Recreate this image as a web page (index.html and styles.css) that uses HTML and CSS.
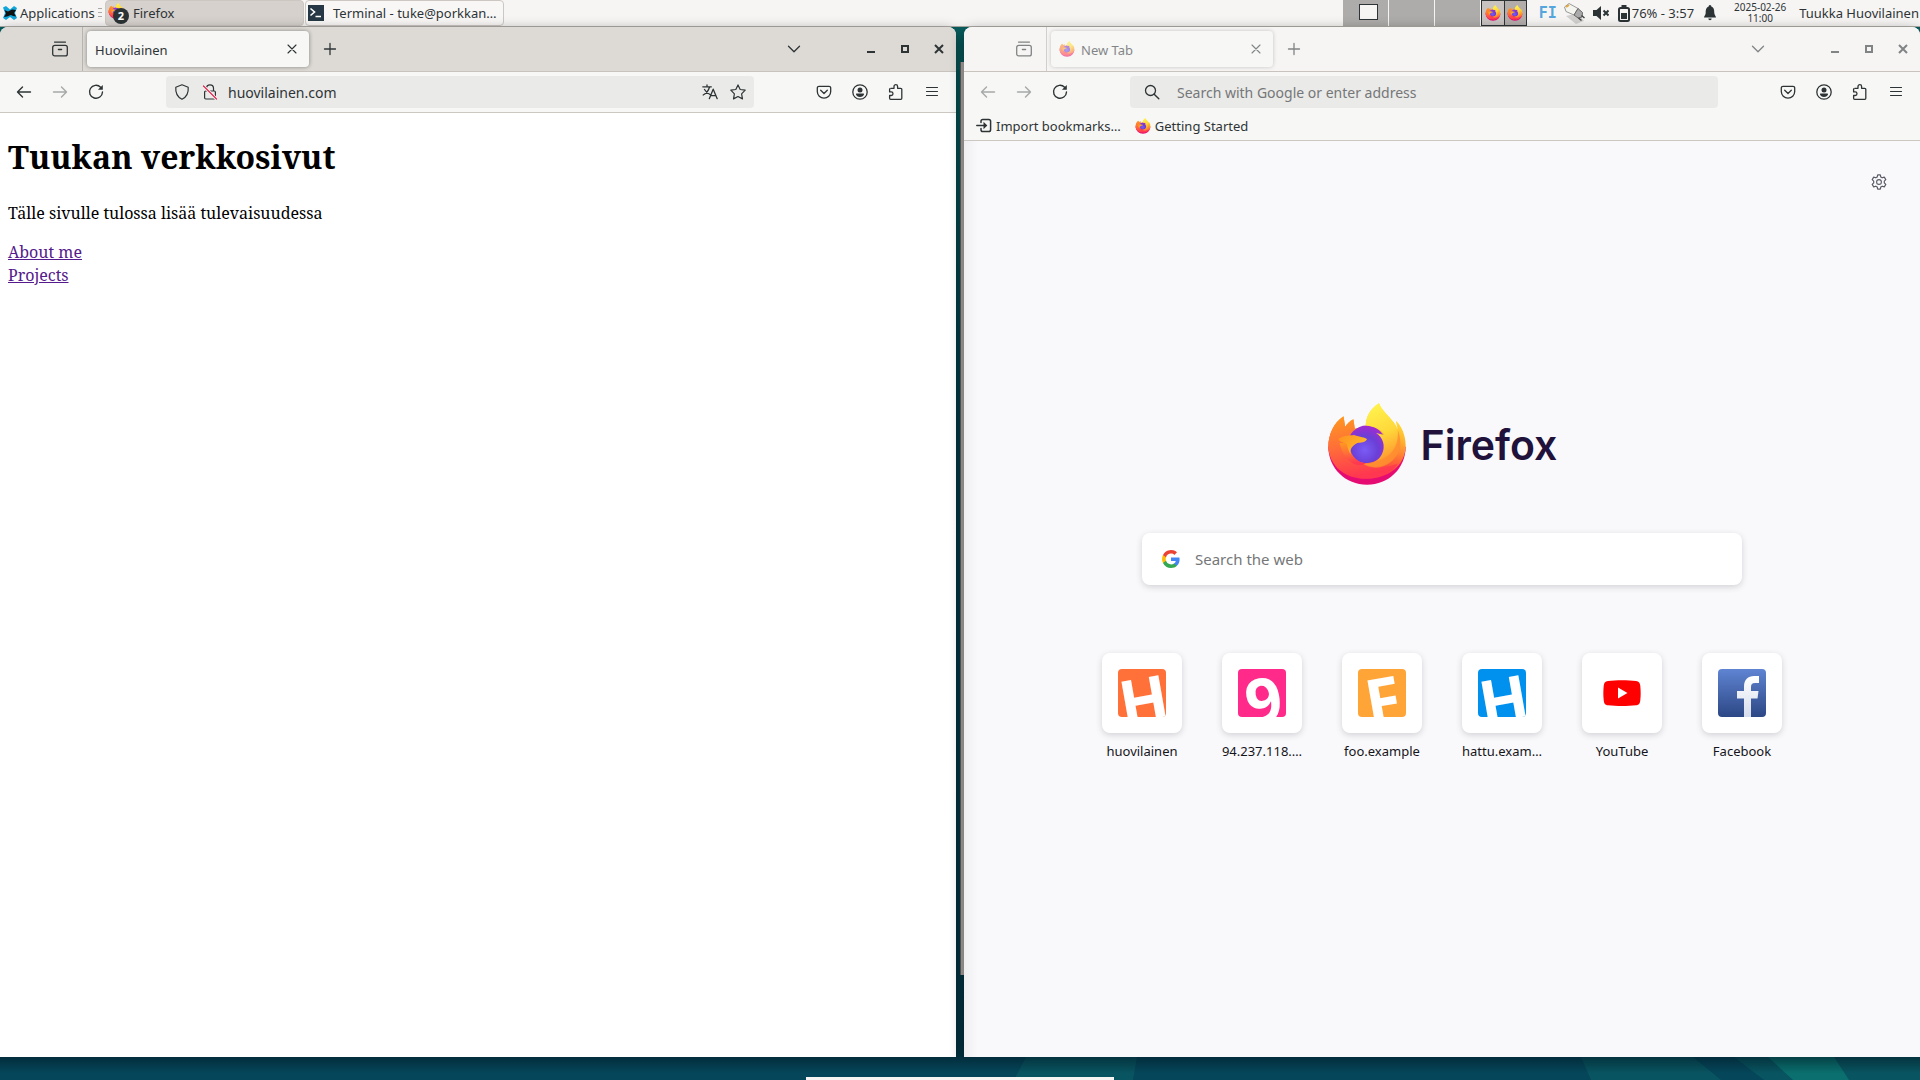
FILE: index.html
```html
<!DOCTYPE html>
<html lang="en">
<head>
<meta charset="utf-8">
<title>Desktop</title>
<link rel="stylesheet" href="styles.css">
</head>
<body>
<svg class="defs" aria-hidden="true">
  <defs>
    <linearGradient id="fx-body" x1="0.75" y1="0.1" x2="0.35" y2="1">
      <stop offset="0" stop-color="#ffe83a"/><stop offset="0.3" stop-color="#ffb02e"/>
      <stop offset="0.55" stop-color="#ff6a36"/><stop offset="0.8" stop-color="#ff3647"/><stop offset="1" stop-color="#e8106e"/>
    </linearGradient>
    <linearGradient id="fx-side" x1="0" y1="0" x2="0.2" y2="1">
      <stop offset="0" stop-color="#ff9a1f"/><stop offset="0.5" stop-color="#ff6f38"/><stop offset="1" stop-color="#ff3750"/>
    </linearGradient>
    <linearGradient id="fx-flame" x1="0.3" y1="0" x2="0.6" y2="1">
      <stop offset="0" stop-color="#fff44f"/><stop offset="0.5" stop-color="#ffd83a"/><stop offset="1" stop-color="#ff8a2e"/>
    </linearGradient>
    <linearGradient id="fx-head" x1="0" y1="0" x2="1" y2="0.6">
      <stop offset="0" stop-color="#ff9020"/><stop offset="1" stop-color="#ffbb2c"/>
    </linearGradient>
    <radialGradient id="fx-globe" cx="0.45" cy="0.65" r="0.65">
      <stop offset="0" stop-color="#7a5cf5"/><stop offset="0.55" stop-color="#6a3fd6"/><stop offset="1" stop-color="#a32bd0"/>
    </radialGradient>
    <linearGradient id="fb" x1="0" y1="0" x2="0" y2="1"><stop offset="0" stop-color="#5f84d2"/><stop offset="1" stop-color="#2c4785"/></linearGradient>
    <linearGradient id="fbf" x1="0" y1="0" x2="0" y2="1"><stop offset="0" stop-color="#fff"/><stop offset="1" stop-color="#d5dcec"/></linearGradient>
  </defs>
  <symbol id="firefox" viewBox="0 0 242 254">
    <path fill="#e60b72" d="M4 135C4 200 56 250 121 250S238 200 238 135Z"/>
    <path fill="url(#fx-body)" d="M50 43C20 62 4 100 4 135C8 196 56 232 118 232C186 232 238 190 238 132C238 102 226 72 208 57L214 84C204 54 170 35 157 4C130 22 118 44 117 74L84 80L80 52C68 58 60 66 55 75Z"/>
    <path fill="url(#fx-side)" d="M50 43C20 62 4 100 4 135C8 196 56 232 118 232C160 232 195 215 215 186C180 200 120 205 85 165L72 130L84 80L80 52C68 58 60 66 55 75Z"/>
    <circle cx="120" cy="128" r="57" fill="url(#fx-globe)"/>
    <path fill="url(#fx-flame)" d="M157 4C130 22 118 44 117 71C145 74 165 84 174 100L148 94C170 106 178 135 166 158C155 180 130 192 105 184C150 212 205 190 220 140C226 115 218 90 214 84C204 54 170 35 157 4Z"/>
    <path fill="#ff8a30" opacity=".75" d="M214 84C218 128 200 164 152 178C128 188 104 184 104 184C144 214 200 196 220 145C226 120 218 95 214 84Z"/>
    <path fill="url(#fx-side)" d="M38 124L68 124C66 154 88 184 118 185C90 202 50 180 38 124Z"/>
    <path fill="url(#fx-head)" d="M34 112C50 100 68 102 82 100C100 106 115 107 121 113C116 123 102 123 92 124C76 132 68 143 72 158C62 145 64 136 58 124C48 124 38 120 34 112Z"/>
  </symbol>
  <symbol id="i-view" viewBox="0 0 16 16"><path fill="none" stroke="currentColor" stroke-width="1.3" stroke-linecap="round" d="M2.5 1.1h11M2.7 4.4h10.6a2 2 0 0 1 2 2v6.500a2 2 0 0 1-2 2H2.700a2 2 0 0 1-2-2v-6.500a2 2 0 0 1 2-2ZM6.400 8.500h3.200"/></symbol>
  <symbol id="i-close" viewBox="0 0 10 10"><path fill="none" stroke="currentColor" stroke-width="1.1" stroke-linecap="round" d="M1 1l8 8M9 1L1 9"/></symbol>
  <symbol id="i-plus" viewBox="0 0 16 16"><path fill="none" stroke="currentColor" stroke-width="1.3" stroke-linecap="round" d="M8 2.500v11M2.500 8h11"/></symbol>
  <symbol id="i-down" viewBox="0 0 16 16"><path fill="none" stroke="currentColor" stroke-width="1.3" stroke-linecap="round" stroke-linejoin="round" d="M2.500 5.200L8 10.700l5.500-5.500"/></symbol>
  <symbol id="i-min" viewBox="0 0 10 10"><path fill="currentColor" d="M1 7h8v2H1z"/></symbol>
  <symbol id="i-max" viewBox="0 0 10 10"><path fill="none" stroke="currentColor" stroke-width="2" d="M2 2h6v6H2z"/></symbol>
  <symbol id="i-x" viewBox="0 0 10 10"><path fill="none" stroke="currentColor" stroke-width="2" d="M1 1l8 8M9 1L1 9"/></symbol>
  <symbol id="i-back" viewBox="0 0 16 16"><path fill="none" stroke="currentColor" stroke-width="1.400" stroke-linecap="round" stroke-linejoin="round" d="M14.500 8H1.800M6.500 3L1.500 8l5 5"/></symbol>
  <symbol id="i-fwd" viewBox="0 0 16 16"><path fill="none" stroke="currentColor" stroke-width="1.400" stroke-linecap="round" stroke-linejoin="round" d="M1.500 8h12.700M9.500 3l5 5-5 5"/></symbol>
  <symbol id="i-reload" viewBox="0 0 16 16"><path fill="none" stroke="currentColor" stroke-width="1.400" stroke-linecap="round" d="M12.600 3.200A6.500 6.500 0 1 0 14.500 8"/><path fill="currentColor" d="M14.800 1.100v4.600h-4.900z"/></symbol>
  <symbol id="i-shield" viewBox="0 0 16 16"><path fill="none" stroke="currentColor" stroke-width="1.200" stroke-linejoin="round" d="M8 .8L14.200 3.200C14.700 9 12.500 13 8 15.300C3.500 13 1.300 9 1.800 3.200Z"/></symbol>
  <symbol id="i-lock" viewBox="0 0 16 16"><path fill="none" stroke="currentColor" stroke-width="1.200" d="M4.500 7V4.300a3.500 3.500 0 0 1 7 0V7M3.800 7h8.400a1.200 1.200 0 0 1 1.200 1.200v5.600a1.200 1.200 0 0 1-1.200 1.200H3.800a1.200 1.200 0 0 1-1.200-1.200V8.200A1.200 1.200 0 0 1 3.800 7Z"/><path stroke="#f8f8f8" stroke-width="3" d="M1.500 2l13 13"/><path stroke="#e22850" stroke-width="1.200" stroke-linecap="round" d="M1.500 2l13 13"/></symbol>
  <symbol id="i-translate" viewBox="0 0 16 16"><path fill="none" stroke="currentColor" stroke-width="1.300" stroke-linecap="round" stroke-linejoin="round" d="M.8 2.800h8.500M5 1v1.600M7.500 3C6.500 7 4 9.500 1.200 11M2.500 5.500C4 8 6 9.500 8 10.500M7.300 14.700L11.200 5.200l4 9.500M8.700 11.700h5"/></symbol>
  <symbol id="i-star" viewBox="0 0 16 16"><path fill="none" stroke="currentColor" stroke-width="1.200" stroke-linejoin="round" d="M8 .9L10.200 5.500l5 .7-3.600 3.600.9 5.100L8 12.500l-4.500 2.400.9-5.100L.8 6.200l5-.7Z"/></symbol>
  <symbol id="i-pocket" viewBox="0 0 16 16"><path fill="none" stroke="currentColor" stroke-width="1.300" stroke-linecap="round" stroke-linejoin="round" d="M3 2.300h10a1.700 1.700 0 0 1 1.700 1.700v3.500a6.700 6.700 0 0 1-13.400 0V4A1.700 1.700 0 0 1 3 2.300ZM4.700 6.300L8 9.500l3.300-3.200"/></symbol>
  <symbol id="i-account" viewBox="0 0 16 16"><circle cx="8" cy="8" r="7.200" fill="none" stroke="currentColor" stroke-width="1.300"/><circle cx="8" cy="5.900" r="2.500" fill="currentColor"/><path fill="currentColor" d="M4.700 9.400h6.600a.8.8 0 0 1 .8.900c-.4 1.600-2 2.600-4.100 2.600s-3.700-1-4.100-2.600a.8.8 0 0 1 .8-.9Z"/></symbol>
  <symbol id="i-ext" viewBox="0 0 16 16"><path fill="none" stroke="currentColor" stroke-width="1.300" stroke-linejoin="round" d="M2.800 4.300H6V2.500a1.800 1.800 0 0 1 3.600 0v1.800h3.200a1 1 0 0 1 1 1v9a1 1 0 0 1-1 1H2.600a1 1 0 0 1-1-1V11.500h1.600a1.800 1.800 0 0 0 0-3.600H1.600V5.300a1 1 0 0 1 1-1"/></symbol>
  <symbol id="i-menu" viewBox="0 0 16 16"><path fill="none" stroke="currentColor" stroke-width="1.200" stroke-linecap="round" d="M2.500 3.500h11M2.500 7.500h11M2.500 11.500h11"/></symbol>
  <symbol id="i-search" viewBox="0 0 16 16"><circle cx="6.500" cy="6.500" r="5" fill="none" stroke="currentColor" stroke-width="1.300"/><path stroke="currentColor" stroke-width="1.400" stroke-linecap="round" d="M10.200 10.200l4.600 4.600"/></symbol>
  <symbol id="i-import" viewBox="0 0 16 16"><path fill="none" stroke="currentColor" stroke-width="1.500" stroke-linecap="round" d="M5 4.500V3.300A1.800 1.800 0 0 1 6.800 1.500h6A1.800 1.800 0 0 1 14.600 3.300v8.400a1.800 1.800 0 0 1-1.800 1.800h-6A1.800 1.800 0 0 1 5 11.700v-1.200M.8 7.500h8"/><path fill="currentColor" d="M7.500 3.800L11.300 7.500l-3.800 3.700z"/></symbol>
  <symbol id="i-gear" viewBox="0 0 16 16"><circle cx="8" cy="8" r="2.400" fill="none" stroke="currentColor" stroke-width="1.100"/><path fill="none" stroke="currentColor" stroke-width="1.200" stroke-linejoin="round" d="M6.700.9h2.600l.5 2.100 1.400.8 2.100-.7 1.500 2.500-1.500 1.500v1.800l1.500 1.500-1.500 2.500-2.100-.7-1.400.8-.5 2.100H6.700l-.5-2.100-1.400-.8-2.100.7-1.500-2.500 1.500-1.500V7.100L1.200 5.600l1.500-2.500 2.100.7L6.200 3Z"/></symbol>
</svg>

<header class="panel">
  <button class="apps">
    <svg class="ic16" viewBox="0 0 16 16"><path fill="#12a5dc" d="M1 2.500L4 1l4 3.500L12 1l3 2-2 5 2 5-3 2-4-3-4 3-3-2 2-5Z"/><path fill="#111" d="M2.500 5L6 6.500 10 4.500l4 .5-2 3 2 3.500-3-.5-2-1-4 1.500-3 .5 2-3.500Z"/></svg>
    Applications
  </button>
  <span class="grip"></span>
  <button class="task active">
    <span class="badged"><svg class="ic16"><use href="#firefox"/></svg><span class="badge">2</span></span>
    <span>Firefox</span>
  </button>
  <button class="task term">
    <svg class="ic16" viewBox="0 0 16 16"><path fill="#263845" d="M0 0h16v16H0z"/><path fill="none" stroke="#fff" stroke-width="1.600" d="M2.500 3.500L6.500 7l-4 3.500M7.500 11.500h5.500"/></svg>
    <span>Terminal - tuke@porkkan…</span>
  </button>
  <span class="grow"></span>
  <div class="workspaces">
    <span class="ws"><span class="mini"></span></span><span class="ws"></span><span class="ws"></span>
    <span class="ws apps2"><svg class="ic16"><use href="#firefox"/></svg><svg class="ic16"><use href="#firefox"/></svg></span>
  </div>
  <span class="kbd">FI</span>
  <svg class="plug" viewBox="0 0 22 22"><path fill="#000" opacity=".15" d="M3 14l12-3 6 8-8 3Z"/><path fill="#f5f5f0" stroke="#999" d="M1.500 5L6 1.500 15 6.500 11 13 3 9.500Z"/><path fill="#aaa" stroke="#666" d="M11 13l4-6.500 4.500 4-.5 4.500-4 1Z"/><path stroke="#444" stroke-width="1.500" d="M15.500 16l3 2.500M18.500 13.500l3 2.500"/><path stroke="#e3a840" stroke-width="2" d="M3 5l3-2"/></svg>
  <svg class="ic16" viewBox="0 0 16 16"><path fill="#2b3335" d="M0 5h3.500L8 1v14l-4.500-4H0z"/><path stroke="#2b3335" stroke-width="2" d="M10.500 5.500l5 5M15.500 5.500l-5 5"/></svg>
  <span class="battery"><svg viewBox="0 0 12 17"><path fill="#2b3335" d="M3.500 0h5v2h-5z"/><rect x="1" y="3" width="10" height="13" rx="1.500" fill="none" stroke="#2b3335" stroke-width="2"/><path fill="#2b3335" d="M3 8h6v6H3z"/></svg>76% - 3:57</span>
  <svg class="bell" viewBox="0 0 12 16"><path fill="#2b3335" d="M6 0C7 0 7.300.8 7.300 1.500 10 2.500 10.300 5 10.300 8 10.300 10 12 11 12 12.500H0C0 11 1.700 10 1.700 8 1.700 5 2 2.500 4.700 1.500 4.700.8 5 0 6 0ZM4.300 13.500h3.400a1.700 1.700 0 0 1-3.400 0Z"/></svg>
  <time class="clock">2025-02-26<br>11:00</time>
  <span class="user">Tuukka Huovilainen</span>
</header>

<main class="desktop">
  <div class="behind"></div>
  <section class="window">
    <div class="titlebar">
      <button class="view" aria-label="Firefox View"><svg class="ic16"><use href="#i-view"/></svg></button>
      <div class="tab"><span class="name">Huovilainen</span><button class="tabclose" aria-label="Close tab"><svg class="ic10"><use href="#i-close"/></svg></button></div>
      <button class="tb" aria-label="New tab"><svg class="ic16"><use href="#i-plus"/></svg></button>
      <span class="grow"></span>
      <button class="tb list" aria-label="List tabs"><svg class="ic16"><use href="#i-down"/></svg></button>
      <button class="wc" aria-label="Minimize"><svg class="ic10"><use href="#i-min"/></svg></button>
      <button class="wc" aria-label="Maximize"><svg class="ic10"><use href="#i-max"/></svg></button>
      <button class="wc" aria-label="Close"><svg class="ic10"><use href="#i-x"/></svg></button>
    </div>
    <div class="toolbar">
      <button class="tb" aria-label="Back"><svg class="ic16"><use href="#i-back"/></svg></button>
      <button class="tb" aria-label="Forward" disabled><svg class="ic16"><use href="#i-fwd"/></svg></button>
      <button class="tb" aria-label="Reload"><svg class="ic16"><use href="#i-reload"/></svg></button>
      <div class="urlbar">
        <svg class="ic16"><use href="#i-shield"/></svg>
        <svg class="ic16 lock"><use href="#i-lock"/></svg>
        <input type="text" value="huovilainen.com" aria-label="Address">
        <button aria-label="Translate"><svg class="ic16"><use href="#i-translate"/></svg></button>
        <button aria-label="Bookmark"><svg class="ic16"><use href="#i-star"/></svg></button>
      </div>
      <button class="tb" aria-label="Pocket"><svg class="ic16"><use href="#i-pocket"/></svg></button>
      <button class="tb" aria-label="Account"><svg class="ic16"><use href="#i-account"/></svg></button>
      <button class="tb" aria-label="Extensions"><svg class="ic16"><use href="#i-ext"/></svg></button>
      <button class="tb" aria-label="Menu"><svg class="ic16"><use href="#i-menu"/></svg></button>
    </div>
    <article class="site">
      <h1>Tuukan verkkosivut</h1>
      <p>Tälle sivulle tulossa lisää tulevaisuudessa</p>
      <a href="#about">About me</a><br>
      <a href="#projects">Projects</a>
    </article>
  </section>

  <section class="window inactive">
    <div class="titlebar">
      <button class="view" aria-label="Firefox View"><svg class="ic16"><use href="#i-view"/></svg></button>
      <div class="tab"><svg class="ic16"><use href="#firefox"/></svg><span class="name">New Tab</span><button class="tabclose" aria-label="Close tab"><svg class="ic10"><use href="#i-close"/></svg></button></div>
      <button class="tb" aria-label="New tab"><svg class="ic16"><use href="#i-plus"/></svg></button>
      <span class="grow"></span>
      <button class="tb list" aria-label="List tabs"><svg class="ic16"><use href="#i-down"/></svg></button>
      <button class="wc" aria-label="Minimize"><svg class="ic10"><use href="#i-min"/></svg></button>
      <button class="wc" aria-label="Maximize"><svg class="ic10"><use href="#i-max"/></svg></button>
      <button class="wc" aria-label="Close"><svg class="ic10"><use href="#i-x"/></svg></button>
    </div>
    <div class="toolbar plain">
      <button class="tb" aria-label="Back" disabled><svg class="ic16"><use href="#i-back"/></svg></button>
      <button class="tb" aria-label="Forward" disabled><svg class="ic16"><use href="#i-fwd"/></svg></button>
      <button class="tb" aria-label="Reload"><svg class="ic16"><use href="#i-reload"/></svg></button>
      <div class="urlbar empty">
        <svg class="ic16"><use href="#i-search"/></svg>
        <input type="text" placeholder="Search with Google or enter address" aria-label="Address">
      </div>
      <button class="tb" aria-label="Pocket"><svg class="ic16"><use href="#i-pocket"/></svg></button>
      <button class="tb" aria-label="Account"><svg class="ic16"><use href="#i-account"/></svg></button>
      <button class="tb" aria-label="Extensions"><svg class="ic16"><use href="#i-ext"/></svg></button>
      <button class="tb" aria-label="Menu"><svg class="ic16"><use href="#i-menu"/></svg></button>
    </div>
    <nav class="bookmarks">
      <a href="#import"><svg class="ic16"><use href="#i-import"/></svg>Import bookmarks…</a>
      <a href="#start"><svg class="ic16"><use href="#firefox"/></svg>Getting Started</a>
    </nav>
    <div class="newtab">
      <button class="gear" aria-label="Personalize"><svg class="ic16"><use href="#i-gear"/></svg></button>
      <div class="brand"><svg><use href="#firefox"/></svg><span>Firefox</span></div>
      <label class="search">
        <svg viewBox="0 0 18 18"><path fill="#4285f4" d="M17.600 9.200c0-.6-.1-1.200-.2-1.800H9v3.500h4.800a4.100 4.100 0 0 1-1.800 2.700v2.200h2.900c1.700-1.600 2.700-3.900 2.700-6.600Z"/><path fill="#34a853" d="M9 18c2.400 0 4.500-.8 6-2.200L12 13.600a5.400 5.400 0 0 1-8-2.900H1V13A9 9 0 0 0 9 18Z"/><path fill="#fbbc05" d="M4 10.700a5.400 5.400 0 0 1 0-3.400V5H1a9 9 0 0 0 0 8Z"/><path fill="#ea4335" d="M9 3.600c1.300 0 2.500.5 3.400 1.300L15 2.300A9 9 0 0 0 1 5l3 2.300a5.400 5.400 0 0 1 5-3.700Z"/></svg>
        <input type="text" placeholder="Search the web" aria-label="Search the web">
      </label>
      <nav class="sites">
        <a href="#1"><span class="card"><span class="letter orange"><b>H</b></span></span>huovilainen</a>
        <a href="#2"><span class="card"><span class="letter pink"><b>9</b></span></span>94.237.118.…</a>
        <a href="#3"><span class="card"><span class="letter amber"><b>F</b></span></span>foo.example</a>
        <a href="#4"><span class="card"><span class="letter blue"><b>H</b></span></span>hattu.exam…</a>
        <a href="#5"><span class="card"><svg viewBox="0 0 48 48"><path fill="red" d="M10 12C18 11 30 11 38 12 41 12.500 42 14 42.300 17 42.800 22 42.800 27 42.300 31 42 34.500 41 36 38 36.300 30 37.200 18 37.200 10 36.300 7 36 6 34.500 5.700 31 5.200 27 5.200 22 5.700 17 6 14 7 12.500 10 12Z"/><path fill="#fff" d="M20 18.500l9.500 5.500-9.500 5.500z"/></svg></span>YouTube</a>
        <a href="#6"><span class="card"><svg viewBox="0 0 48 48"><rect width="48" height="48" rx="4" fill="url(#fb)"/><path fill="url(#fbf)" d="M26 48V29.500h-7V22h7v-4C26 10.500 30 7 36 7h5v7h-4c-3 0-4 1.500-4 4v4h7.500l-1 7.500H33V48Z"/></svg></span>Facebook</a>
      </nav>
    </div>
  </section>
</main>

<footer class="wallpaper">
  <svg preserveAspectRatio="none" viewBox="0 0 1920 23"><path fill="#085460" d="M1026 0h111l-4 23h-119zM1581 0h112l28 23h-130zM1734 0h186v23h-156z"/><path fill="#0a6f6e" d="M1768 0h66l15 23h-56z"/></svg>
  <div class="peek"></div>
</footer>
</body>
</html>
```
FILE: styles.css
```css
* { box-sizing: border-box; }
body {
  margin: 0;
  min-height: 100vh;
  display: grid;
  grid-template-rows: 27px 1fr 23px;
  font-family: "Noto Sans", sans-serif;
  font-size: 13px;
  color: #2e3436;
  background: linear-gradient(#0a6464, #055558 120px, #023c4b 420px, #033647);
}
button { font: inherit; color: inherit; background: none; border: 0; padding: 0; display: flex; align-items: center; justify-content: center; }
input { font: inherit; color: inherit; background: none; border: 0; padding: 0; min-width: 0; flex: 1; outline: none; }
a { color: inherit; text-decoration: none; }
svg { display: block; flex: none; }
.defs { position: absolute; width: 0; height: 0; }
.ic16 { width: 16px; height: 16px; }
.ic10 { width: 10px; height: 10px; }
.grow { flex: 1; }

/* Top panel */
.panel { display: flex; align-items: center; background: #f6f5f4; border-bottom: 1px solid #b0aca6; white-space: nowrap; overflow: hidden; }
.apps { margin-left: 2px; width: 94px; gap: 2px; justify-content: flex-start; }
.grip { width: 4px; height: 10px; margin: 0 3px 0 2px; background: repeating-linear-gradient(#aaa 0 1px, transparent 1px 4px); }
.task { width: 199px; height: 26px; padding: 0 2px; margin-right: 1px; justify-content: flex-start; border-radius: 4px; border: 1px solid #cdc7c2; }
.task.active { background: #d6d1cd; }
.term { background: #f8f7f6; gap: 9px; }
.badged { position: relative; width: 25px; height: 24px; padding-top: 2px; }
.badge { position: absolute; left: 5px; top: 7px; width: 16px; height: 16px; border-radius: 50%; background: #2b3335; color: #fff; font-size: 11px; font-weight: 700; line-height: 16px; text-align: center; }
.workspaces { display: flex; gap: 1px; height: 26px; margin-right: 12px; }
.ws { width: 45px; background: #aeacaa; display: flex; align-items: center; justify-content: center; }
.mini { width: 19px; height: 16px; margin-bottom: 2px; margin-left: 6px; border: 1px solid #2e3436; background: #f6f5f4; }
.apps2 { width: 46px; border: 1px solid #2e3436; gap: 6px; background: linear-gradient(90deg, #c8c3c0 22px, #2e3436 22px 23px, #b2adaa 23px); }
.kbd { width: 18px; font: 700 15px "DejaVu Sans Mono", monospace; color: #56a5dc; }
.plug { width: 22px; height: 22px; margin: 0 8px 0 6px; }
.battery { display: flex; align-items: center; gap: 2px; margin: 0 10px 0 9px; }
.battery svg { width: 12px; height: 17px; }
.bell { width: 12px; height: 16px; }
.clock { width: 58px; margin: 0 10px 0 15px; font-size: 10px; line-height: 11px; text-align: center; }
.user { padding-right: 1px; }

/* Browser windows */
.desktop { position: relative; display: grid; grid-template-columns: 1fr 1fr; gap: 8px; }
.behind { position: absolute; left: 50%; top: 35px; bottom: 82px; width: 5px; border-left: 1px solid #6b6867; background: #b9b5b4; }
.window { position: relative; display: flex; flex-direction: column; min-width: 0; border-radius: 8px 8px 0 0; overflow: hidden; background: #fff; box-shadow: 0 4px 14px rgba(0, 0, 0, .45); }
.titlebar { display: flex; align-items: center; height: 45px; background: #dddad5; border-bottom: 1px solid #c8c4bd; }
.view { width: 83px; height: 44px; padding-left: 38px; border-right: 1px solid #b8b4ae; }
.tab { display: flex; align-items: center; gap: 6px; width: 222px; height: 36px; margin: 0 3px 0 4px; padding: 0 12px 0 8px; border-radius: 4px; background: #f7f7f6; box-shadow: 0 0 4px rgba(0, 0, 0, .4); }
.tab .name { flex: 1; padding-top: 2px; }
.tb { width: 36px; height: 32px; }
.tb:disabled { color: #2e343666; }
.list { margin-right: 42px; }
.wc { width: 34px; height: 32px; }
.toolbar { display: flex; align-items: center; height: 41px; padding: 0 6px; background: #f7f7f5; border-bottom: 1px solid #ccc8c1; }
.plain { height: 40px; border: 0; }
.urlbar { flex: 1; min-width: 0; display: flex; align-items: center; height: 32px; margin: 0 52px; padding: 0 8px; border-radius: 4px; background: #eaeae8; font-size: 14px; }
.urlbar .lock { margin: 0 10px 0 12px; }
.urlbar button { margin-left: 12px; width: 16px; }
.empty { padding-left: 14px; gap: 17px; }
input::placeholder { color: #757779; opacity: 1; }
.inactive .titlebar { background: #f6f5f4; }
.inactive .titlebar > button, .inactive .tab > * { opacity: .58; }
.inactive .tab { box-shadow: 0 0 4px rgba(0, 0, 0, .2); }
.bookmarks { display: flex; height: 29px; padding: 0 12px; gap: 14px; background: #f7f7f5; border-bottom: 1px solid #ccc8c1; }
.bookmarks a { display: flex; align-items: center; gap: 4px; }

/* Page on the left */
.site { flex: 1; padding: 0 8px; color: #000; font: 16px/23px "Noto Serif", "DejaVu Serif Condensed", "DejaVu Serif", serif; }
.site h1 { margin: 22px 0 23px; font-size: 32px; line-height: 44px; }
.site p { margin: 0 0 16px; }
.site a { color: #551a8b; text-decoration: underline; }

/* New tab page */
.newtab { flex: 1; display: flex; flex-direction: column; align-items: center; background: linear-gradient(90deg, #efeff2, #f9f9fb 14px); color: #15141a; }
.gear { align-self: flex-end; width: 32px; height: 32px; margin: 25px 25px 205px 0; color: #5b5b66; }
.brand { display: flex; align-items: center; gap: 14px; height: 82px; }
.brand svg { width: 80px; height: 84px; }
.brand span { padding-top: 2px; color: #20123a; font: 600 41px/48px Inter, sans-serif; }
.search { display: flex; align-items: center; gap: 15px; width: 600px; max-width: 90%; height: 52px; margin: 48px 0 68px; padding: 0 20px; border-radius: 8px; background: #fff; box-shadow: 0 2px 6px rgba(58, 57, 68, .2); font-size: 15px; }
.search svg { width: 18px; height: 18px; }
.sites { display: flex; }
.sites a { display: flex; flex-direction: column; align-items: center; gap: 8px; width: 120px; line-height: 20px; }
.card { display: flex; align-items: center; justify-content: center; width: 80px; height: 80px; border-radius: 8px; background: #fff; box-shadow: 0 2px 6px rgba(58, 57, 68, .2); }
.card svg { width: 48px; height: 48px; }
.letter { display: flex; align-items: center; justify-content: center; width: 48px; height: 48px; border-radius: 4px; overflow: hidden; color: #fff; }
.letter b { font-size: 64px; line-height: 64px; padding-top: 14px; transform: rotate(-10deg); }
.orange { background: #ff7139; }
.pink { background: #ff2a8a; }
.amber { background: #ffa436; }
.blue { background: #0090ed; }

/* Wallpaper strip below the windows */
.wallpaper { position: relative; overflow: hidden; background: #05465a; }
.wallpaper svg { width: 100%; height: 100%; }
.wallpaper::before { content: ""; position: absolute; inset: 0; background: linear-gradient(rgba(0, 20, 30, .5), transparent 16px); }
.peek { position: absolute; left: 42%; bottom: 0; width: 16%; height: 3px; background: #f6f5f4; }
```
